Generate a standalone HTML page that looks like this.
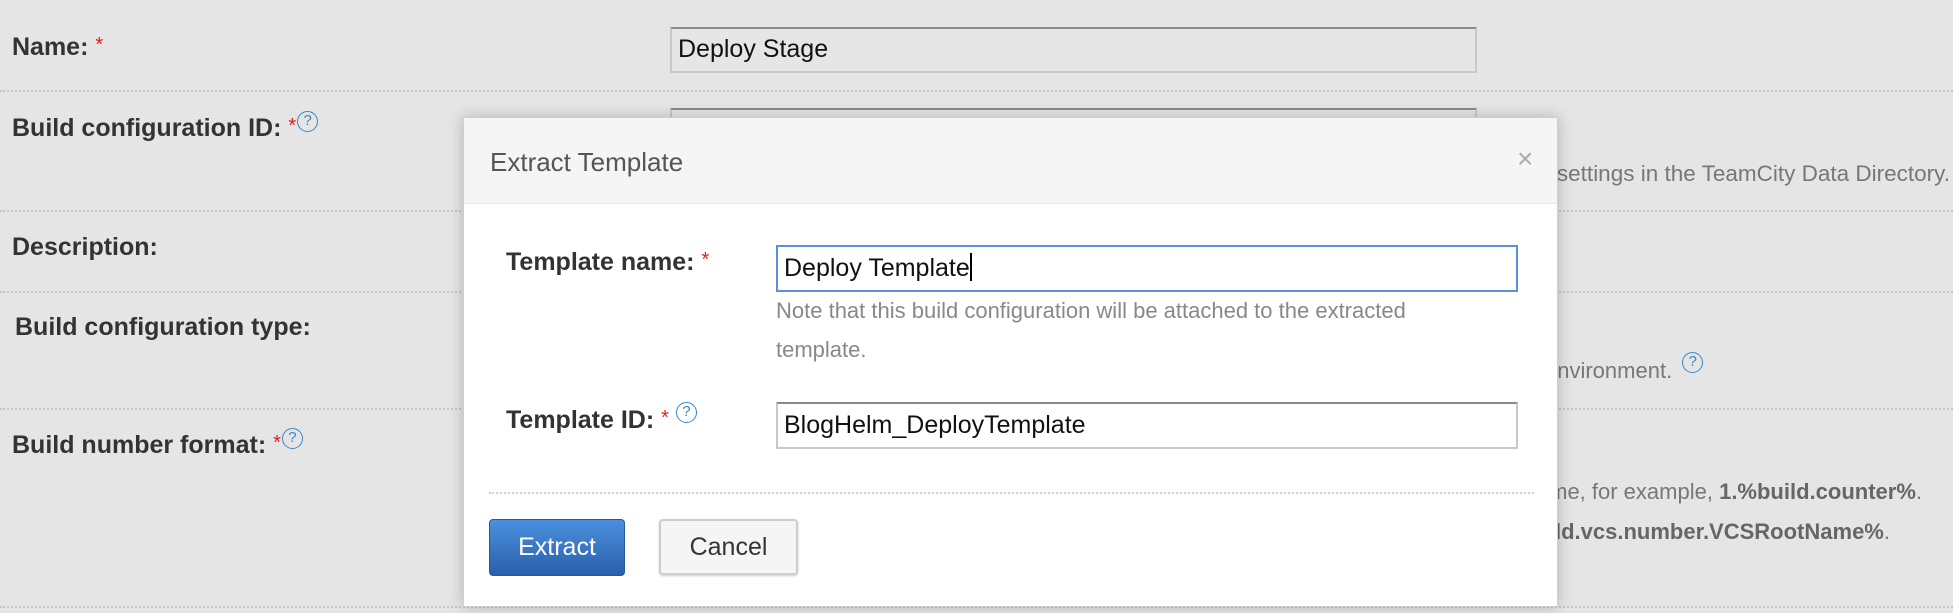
<!DOCTYPE html>
<html><head><meta charset="utf-8"><style>
*{margin:0;padding:0;box-sizing:border-box}
body{width:1953px;height:613px;background:#e5e5e5;font-family:"Liberation Sans",Arial,sans-serif;position:relative;overflow:hidden;color:#333}
.a{position:absolute;white-space:nowrap}
.lbl{font-weight:bold;font-size:25px;color:#333}
.req{color:#e0201a;font-weight:normal;font-size:20px;vertical-align:4px}
.dot{position:absolute;left:0;width:1953px;border-top:2px dotted #c4c4c4;height:0}
.help{display:inline-block;width:21px;height:21px;border:1.5px solid #3b87c4;border-radius:50%;color:#3b87c4;font-size:15px;line-height:18px;text-align:center;font-weight:normal;vertical-align:top}
.bg{font-size:22px;color:#777}
.bg b{color:#666}
.inp{position:absolute;border:2px solid #c8c8c8;border-top-color:#8a8a8a;font-size:25px;color:#111;padding-left:6px;line-height:40px}
</style></head><body>
<div class="a lbl" style="left:12px;top:33px">Name: <span class="req">*</span></div>
<div class="inp" style="left:670px;top:27px;width:807px;height:46px;background:#e6e6e6;line-height:40px">Deploy Stage</div>
<div class="dot" style="top:90px"></div>
<div class="a lbl" style="left:12px;top:114px">Build configuration ID: <span class="req">*</span><span class="help" style="margin-top:-3px;margin-left:1px">?</span></div>
<div class="inp" style="left:670px;top:108px;width:807px;height:46px;background:#e6e6e6"></div>
<div class="dot" style="top:210px"></div>
<div class="a lbl" style="left:12px;top:233px">Description:</div>
<div class="dot" style="top:291px"></div>
<div class="a lbl" style="left:15px;top:313px">Build configuration type:</div>
<div class="dot" style="top:408px"></div>
<div class="a lbl" style="left:12px;top:431px">Build number format: <span class="req">*</span><span class="help" style="margin-top:-3px;margin-left:1px">?</span></div>
<div class="dot" style="top:606px"></div>

<div class="a bg" style="right:3px;top:161px;font-size:22.5px">settings in the TeamCity Data Directory.</div>
<div class="a bg" style="left:1545px;top:358px">environment. <span class="help" style="margin-top:-6px;margin-left:4px">?</span></div>
<div class="a bg" style="right:31px;top:479px">name, for example, <b>1.%build.counter%</b>.</div>
<div class="a bg" style="right:63px;top:519px"><b>%build.vcs.number.VCSRootName%</b>.</div>

<div class="a" style="left:463px;top:117px;width:1095px;height:490px;background:#fff;border:1px solid #cfcfcf;box-shadow:0 0 14px rgba(0,0,0,0.22)">
 <div style="height:86px;background:#f5f5f5;border-bottom:1px solid #ebebeb;position:relative">
  <div class="a" style="left:26px;top:29px;font-size:26px;color:#555">Extract Template</div>
  <div class="a" style="left:1053px;top:25px;font-size:28px;color:#aaa">×</div>
 </div>
 <div class="a lbl" style="left:42px;top:130px">Template name: <span class="req">*</span></div>
 <div class="a" style="left:312px;top:127px;width:742px;height:47px;border:2px solid #5b8fe0;font-size:25px;color:#111;padding-left:6px;line-height:42px">Deploy Template<span style="display:inline-block;width:2px;height:28px;background:#000;vertical-align:-5px"></span></div>
 <div class="a" style="left:312px;top:173px;font-size:22px;color:#888;line-height:39px;white-space:normal;width:720px">Note that this build configuration will be attached to the extracted template.</div>
 <div class="a lbl" style="left:42px;top:288px">Template ID: <span class="req">*</span> <span class="help" style="margin-top:-4px">?</span></div>
 <div class="a" style="left:312px;top:284px;width:742px;height:47px;border:2px solid #c8c8c8;border-top-color:#8a8a8a;font-size:25px;color:#111;padding-left:6px;line-height:42px">BlogHelm_DeployTemplate</div>
 <div style="position:absolute;left:25px;top:374px;width:1045px;border-top:2px dotted #cfcfcf"></div>
 <div class="a" style="left:25px;top:401px;width:136px;height:57px;border-radius:4px;background:linear-gradient(#4a90dc,#2a5fad);border:1px solid #2a58a0;color:#fff;font-size:25px;text-align:center;line-height:55px">Extract</div>
 <div class="a" style="left:195px;top:401px;width:139px;height:56px;border-radius:4px;background:#f5f5f5;border:2px solid #cdcdcd;box-shadow:0 1px 2px rgba(0,0,0,0.2);color:#333;font-size:25px;text-align:center;line-height:52px">Cancel</div>
</div>
</body></html>
